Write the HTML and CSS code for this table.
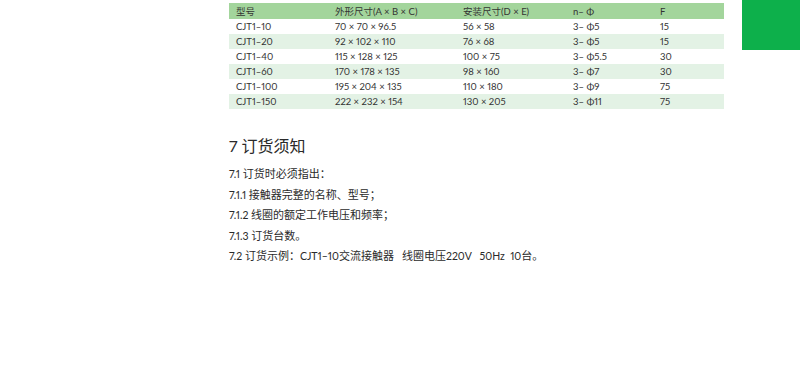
FILE: index.html
```html
<!DOCTYPE html>
<html lang="zh">
<head>
<meta charset="utf-8">
<title>CJT1 订货须知</title>
<link rel="stylesheet" href="styles.css">
</head>
<body>
<div class="page">
  <main class="content">
    <table class="spec">
      <thead>
        <tr><th>型号</th><th>外形尺寸(A × B × C)</th><th>安装尺寸(D × E)</th><th>n– Φ</th><th>F</th></tr>
      </thead>
      <tbody>
        <tr><td>CJT1–10</td><td>70 × 70 × 96.5</td><td>56 × 58</td><td>3– Φ5</td><td>15</td></tr>
        <tr><td>CJT1–20</td><td>92 × 102 × 110</td><td>76 × 68</td><td>3– Φ5</td><td>15</td></tr>
        <tr><td>CJT1–40</td><td>115 × 128 × 125</td><td>100 × 75</td><td>3– Φ5.5</td><td>30</td></tr>
        <tr><td>CJT1–60</td><td>170 × 178 × 135</td><td>98 × 160</td><td>3– Φ7</td><td>30</td></tr>
        <tr><td>CJT1–100</td><td>195 × 204 × 135</td><td>110 × 180</td><td>3– Φ9</td><td>75</td></tr>
        <tr><td>CJT1–150</td><td>222 × 232 × 154</td><td>130 × 205</td><td>3– Φ11</td><td>75</td></tr>
      </tbody>
    </table>
    <h2 class="title">7 订货须知</h2>
    <p class="line"><span class="en">7.1 </span>订货时必须指出：</p>
    <p class="line"><span class="en">7.1.1 </span>接触器完整的名称、型号；</p>
    <p class="line"><span class="en">7.1.2 </span>线圈的额定工作电压和频率；</p>
    <p class="line"><span class="en">7.1.3 </span>订货台数。</p>
    <p class="line"><span class="en">7.2 </span>订货示例：<span class="en">CJT1–10</span>交流接触器<span class="en">&nbsp;&nbsp;&nbsp;</span>线圈电压<span class="en">220V&nbsp;&nbsp;&nbsp;50Hz&nbsp;&nbsp;10</span>台。</p>
  </main>
  <div class="tab"></div>
</div>
</body>
</html>
```
FILE: styles.css
```css
html, body {
  margin: 0;
  padding: 0;
  background: #ffffff;
}
body {
  font-family: Lato, "Noto Sans CJK SC", sans-serif;
  font-variant-numeric: proportional-nums;
  color: #2f2f2f;
}
.page {
  display: flex;
  align-items: flex-start;
  padding-left: 229px;
}
.content {
  width: 495px;
  padding-top: 3px;
}
.tab {
  width: 58px;
  height: 50px;
  margin-left: 18px;
  background: #0db04b;
}
.spec {
  width: 495px;
  border-collapse: collapse;
  table-layout: fixed;
  font-size: 9.5px;
  color: #333333;
}
.spec th, .spec td {
  text-align: left;
  font-weight: 400;
  padding: 0 0 0 7px;
  white-space: nowrap;
}
.spec th {
  height: 16px;
  background: #a3d59c;
}
.spec td {
  height: 15px;
}
.spec th:nth-child(1) { width: 92px; }
.spec th:nth-child(2) { width: 121px; }
.spec th:nth-child(3) { width: 103px; }
.spec th:nth-child(4) { width: 80px; }
.spec tbody tr:nth-child(even) td {
  background: #e3f2e5;
}
.title {
  margin: 27px 0 8px;
  font-size: 16px;
  line-height: 20px;
  font-weight: 400;
  color: #2a2a2a;
}
.line {
  margin: 0;
  font-size: 11px;
  line-height: 19.5px;
  color: #2a2a2a;
}
.en {
  font-size: 10.5px;
}
```
